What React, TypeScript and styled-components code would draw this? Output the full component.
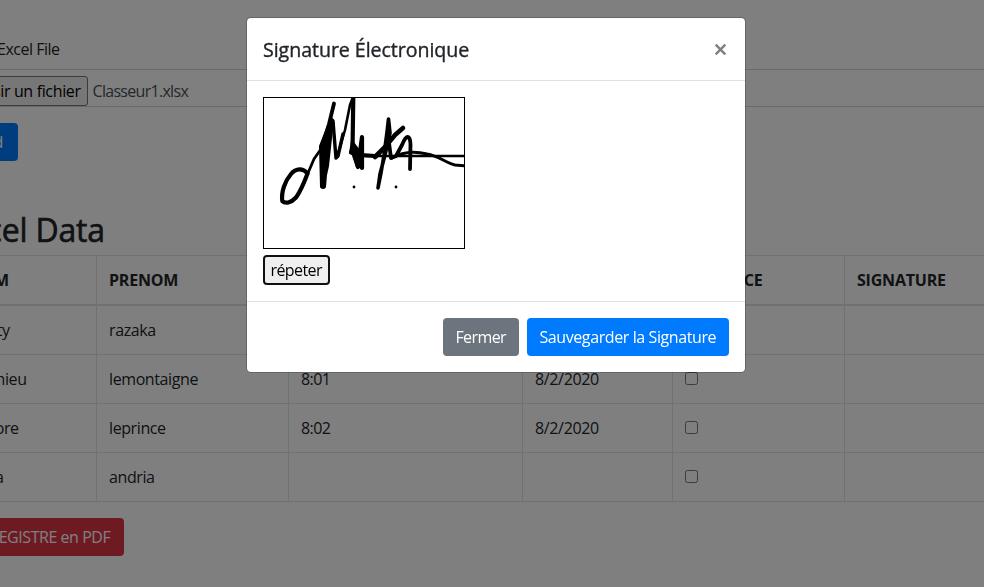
import React from "react";
import styled, { createGlobalStyle } from "styled-components";

const GlobalStyle = createGlobalStyle`
  * { box-sizing: border-box; }
  body {
    margin: 0;
    overflow: hidden;
    background: #fff;
    color: #212529;
    font: 400 16px/24px "Open Sans", "Noto Sans", sans-serif;
  }
`;

const Page = styled.main`
  height: 587px;
  overflow: hidden;
  padding-top: 29px;
`;

/* Holds content that runs off the left side of the window. */
const Clipped = styled.div<{ $w: number; $h: number }>`
  display: flex;
  align-items: center;
  justify-content: flex-end;
  width: ${(p) => p.$w}px;
  height: ${(p) => p.$h}px;
  white-space: nowrap;
`;

const Text = styled.span<{ $ls?: number }>`
  white-space: nowrap;
  letter-spacing: ${(p) => p.$ls ?? -0.4}px;
  margin-right: ${(p) => -(p.$ls ?? -0.4)}px;
`;

const FieldHead = styled.div`
  height: 41px;
  border-bottom: 1px solid #ced4da;
  padding-top: 8px;
`;

const FileRow = styled.div`
  display: flex;
  align-items: center;
  height: 37px;
  padding-top: 6px;
  border-bottom: 1px solid #ced4da;
  color: #495057;
`;

const FileButton = styled.button`
  display: flex;
  flex: none;
  align-items: center;
  justify-content: flex-end;
  height: 30px;
  width: 140px;
  margin: 0 4.5px 0 -52px;
  padding: 0 6px;
  border: 1px solid #767676;
  border-radius: 3px;
  background: #efefef;
  color: #000;
  font: inherit;
`;

const Button = styled.button<{ $bg: string; $w: number }>`
  display: flex;
  flex: none;
  align-items: center;
  justify-content: center;
  width: ${(p) => p.$w}px;
  height: 38px;
  padding: 0;
  border: 0;
  border-radius: 4px;
  background: ${(p) => p.$bg};
  color: #fff;
  font: inherit;
`;

const UploadSlot = styled(Clipped)`
  margin-top: 16px;
`;

const Heading = styled.h2`
  margin: 0;
  font-size: 32px;
  font-weight: 500;
  line-height: 38px;
  -webkit-text-stroke: 0.6px currentColor;
`;

const HeadingSlot = styled(Clipped)`
  margin-top: 50px;
`;

const Table = styled.div`
  margin-top: 6px;
  border-top: 1px solid #dee2e6;
`;

const Row = styled.div<{ $head?: boolean }>`
  display: grid;
  grid-template-columns: 97px 192px 234px 150px 172px 1fr;
  height: ${(p) => (p.$head ? 50 : 49)}px;
  border-bottom: ${(p) => (p.$head ? 2 : 1)}px solid #dee2e6;
  font-weight: ${(p) => (p.$head ? 700 : 400)};
`;

const Cell = styled.div`
  display: flex;
  align-items: center;
  padding: 0 12px;
  border-right: 1px solid #dee2e6;
  &:last-child { border-right: 0; }
`;

const EdgeCell = styled(Cell)<{ $end: number }>`
  justify-content: flex-end;
  padding: 0 ${(p) => 96 - p.$end}px 0 0;
`;

const Checkbox = styled.input.attrs({ type: "checkbox" })`
  appearance: none;
  width: 13px;
  height: 13px;
  margin: 0 0 1px;
  border: 1px solid #767676;
  border-radius: 2.5px;
  background: #fff;
`;

const PdfSlot = styled(Clipped)`
  margin-top: 16px;
`;

const Backdrop = styled.div`
  position: fixed;
  inset: 0;
  display: flex;
  justify-content: center;
  align-items: flex-start;
  padding: 17px 0 0 8px;
  background: rgba(0, 0, 0, 0.5);
`;

const Dialog = styled.section`
  width: 500px;
  height: 356px;
  border: 1px solid rgba(0, 0, 0, 0.2);
  border-radius: 5px;
  background: #fff;
  background-clip: padding-box;
`;

const DialogHeader = styled.header`
  display: flex;
  align-items: center;
  justify-content: space-between;
  height: 63px;
  padding: 0 18px 0 16px;
  border-bottom: 1px solid #dee2e6;
`;

const DialogTitle = styled.h5`
  margin: 1px 0 0;
  font-size: 19.6px;
  font-weight: 500;
  line-height: 30px;
  -webkit-text-stroke: 0.35px currentColor;
`;

const CloseButton = styled.button`
  display: flex;
  padding: 0;
  border: 0;
  background: none;
`;

const DialogBody = styled.div`
  height: 220px;
  padding: 16px;
`;

const Pad = styled.div`
  width: 202px;
  height: 152px;
  border: 1px solid #000;
  svg { display: block; }
`;

const RepeatButton = styled.button`
  display: flex;
  align-items: center;
  justify-content: center;
  width: 67px;
  height: 30px;
  margin-top: 6px;
  padding: 0;
  border: 2px solid #101010;
  border-radius: 4px;
  background: #efefef;
  color: #000;
  font: inherit;
`;

const DialogFooter = styled.footer`
  display: flex;
  justify-content: flex-end;
  gap: 8px;
  padding: 16px;
  border-top: 1px solid #dee2e6;
`;

const rows = [
  { nom: "ty", end: 10, prenom: "razaka", heure: "", date: "" },
  { nom: "hieu", end: 27, prenom: "lemontaigne", heure: "8:01", date: "8/2/2020" },
  { nom: "ore", end: 19, prenom: "leprince", heure: "8:02", date: "8/2/2020" },
  { nom: "a", end: 4, prenom: "andria", heure: "", date: "" },
];

function Signature() {
  return (
    <svg width="200" height="150" viewBox="0 0 200 150" fill="none" stroke="#000" strokeLinecap="round" strokeLinejoin="round">
      <path strokeWidth="4.2" d="M43.6 75.5C39 70 32 70 27 76C21 83 17 94 18.3 103C21 106 27 105 32 99.5C37 93 40 85 43.6 75.5" />
      <path strokeWidth="2.8" d="M43.6 76L50 61L57 51" />
      <path strokeWidth="3.8" d="M59 46L65 26L70 5.5" />
      <path fill="#000" strokeWidth="2" d="M67 20L56 48L57 89Q59 91 61 89L62 77L64 68L68 31L70 32L69 22Z" />
      <path strokeWidth="3.4" d="M69 23L71 48L72 60L74 58L79 36" />
      <path strokeWidth="2.6" d="M73 59L81 32L86 7L89 -1" />
      <path strokeWidth="4.2" d="M89.3 -1L88.6 46L90 57L94 69L98 39V70" />
      <path fill="#000" strokeWidth="2" d="M88 43L94 51L97 67L93 69L90 57L86 55Z" />
      <path strokeWidth="3.8" d="M87 54L97 57L111 58" />
      <path strokeWidth="2.6" d="M97 58H202" />
      <path strokeWidth="3.6" d="M124.5 21L123 34L120 57L117 75L114 90L116 76L121 57L126 35Z" />
      <path strokeWidth="4.6" d="M139 30L131 37L121 49L111 59" />
      <path strokeWidth="3.8" d="M125 28L125 45L127 60L132 58L138 47C142 37 146 36 146.5 46L146 71" />
      <path strokeWidth="3" d="M128 60C138 54 151 53 163 56C175 58 182 65 191 67L202 68" />
      <circle cx="90" cy="89" r="1.4" fill="#000" stroke="none" />
      <circle cx="132" cy="89" r="1.4" fill="#000" stroke="none" />
    </svg>
  );
}

export default function App() {
  return (
    <>
      <GlobalStyle />
      <Page>
        <FieldHead>
          <Clipped $w={60} $h={24}><Text $ls={-0.5}>Excel File</Text></Clipped>
        </FieldHead>
        <FileRow>
          <FileButton><Text $ls={-0.35}>Choisir un fichier</Text></FileButton>
          <Text $ls={-0.7}>Classeur1.xlsx</Text>
        </FileRow>
        <UploadSlot $w={18} $h={38}>
          <Button $bg="#007bff" $w={81}><Text>Upload</Text></Button>
        </UploadSlot>
        <HeadingSlot $w={105} $h={38}>
          <Heading><Text $ls={-0.2}>Excel Data</Text></Heading>
        </HeadingSlot>
        <Table>
          <Row $head>
            <EdgeCell $end={9}>NOM</EdgeCell>
            <Cell><Text $ls={-0.2}>PRENOM</Text></Cell>
            <Cell />
            <Cell />
            <Cell><Text $ls={-0.25}>PRESENCE</Text></Cell>
            <Cell><Text $ls={-0.2}>SIGNATURE</Text></Cell>
          </Row>
          {rows.map((r) => (
            <Row key={r.prenom}>
              <EdgeCell $end={r.end}><Text>{r.nom}</Text></EdgeCell>
              <Cell><Text>{r.prenom}</Text></Cell>
              <Cell><Text $ls={-0.6}>{r.heure}</Text></Cell>
              <Cell><Text $ls={-0.35}>{r.date}</Text></Cell>
              <Cell><Checkbox /></Cell>
              <Cell />
            </Row>
          ))}
        </Table>
        <PdfSlot $w={124} $h={38}>
          <Button $bg="#dc3545" $w={148}><Text $ls={-0.45}>REGISTRE en PDF</Text></Button>
        </PdfSlot>
      </Page>
      <Backdrop>
        <Dialog role="dialog">
          <DialogHeader>
            <DialogTitle><Text $ls={-0.05}>Signature Électronique</Text></DialogTitle>
            <CloseButton aria-label="Fermer">
              <svg width="13" height="13" viewBox="0 0 13 13" stroke="#7f7f7f" strokeWidth="2.4">
                <path d="M1.7 1.7L11.3 11.3M11.3 1.7L1.7 11.3" />
              </svg>
            </CloseButton>
          </DialogHeader>
          <DialogBody>
            <Pad><Signature /></Pad>
            <RepeatButton><Text $ls={-0.6}>répeter</Text></RepeatButton>
          </DialogBody>
          <DialogFooter>
            <Button $bg="#6c757d" $w={76}><Text $ls={-0.6}>Fermer</Text></Button>
            <Button $bg="#007bff" $w={202}><Text>Sauvegarder la Signature</Text></Button>
          </DialogFooter>
        </Dialog>
      </Backdrop>
    </>
  );
}
